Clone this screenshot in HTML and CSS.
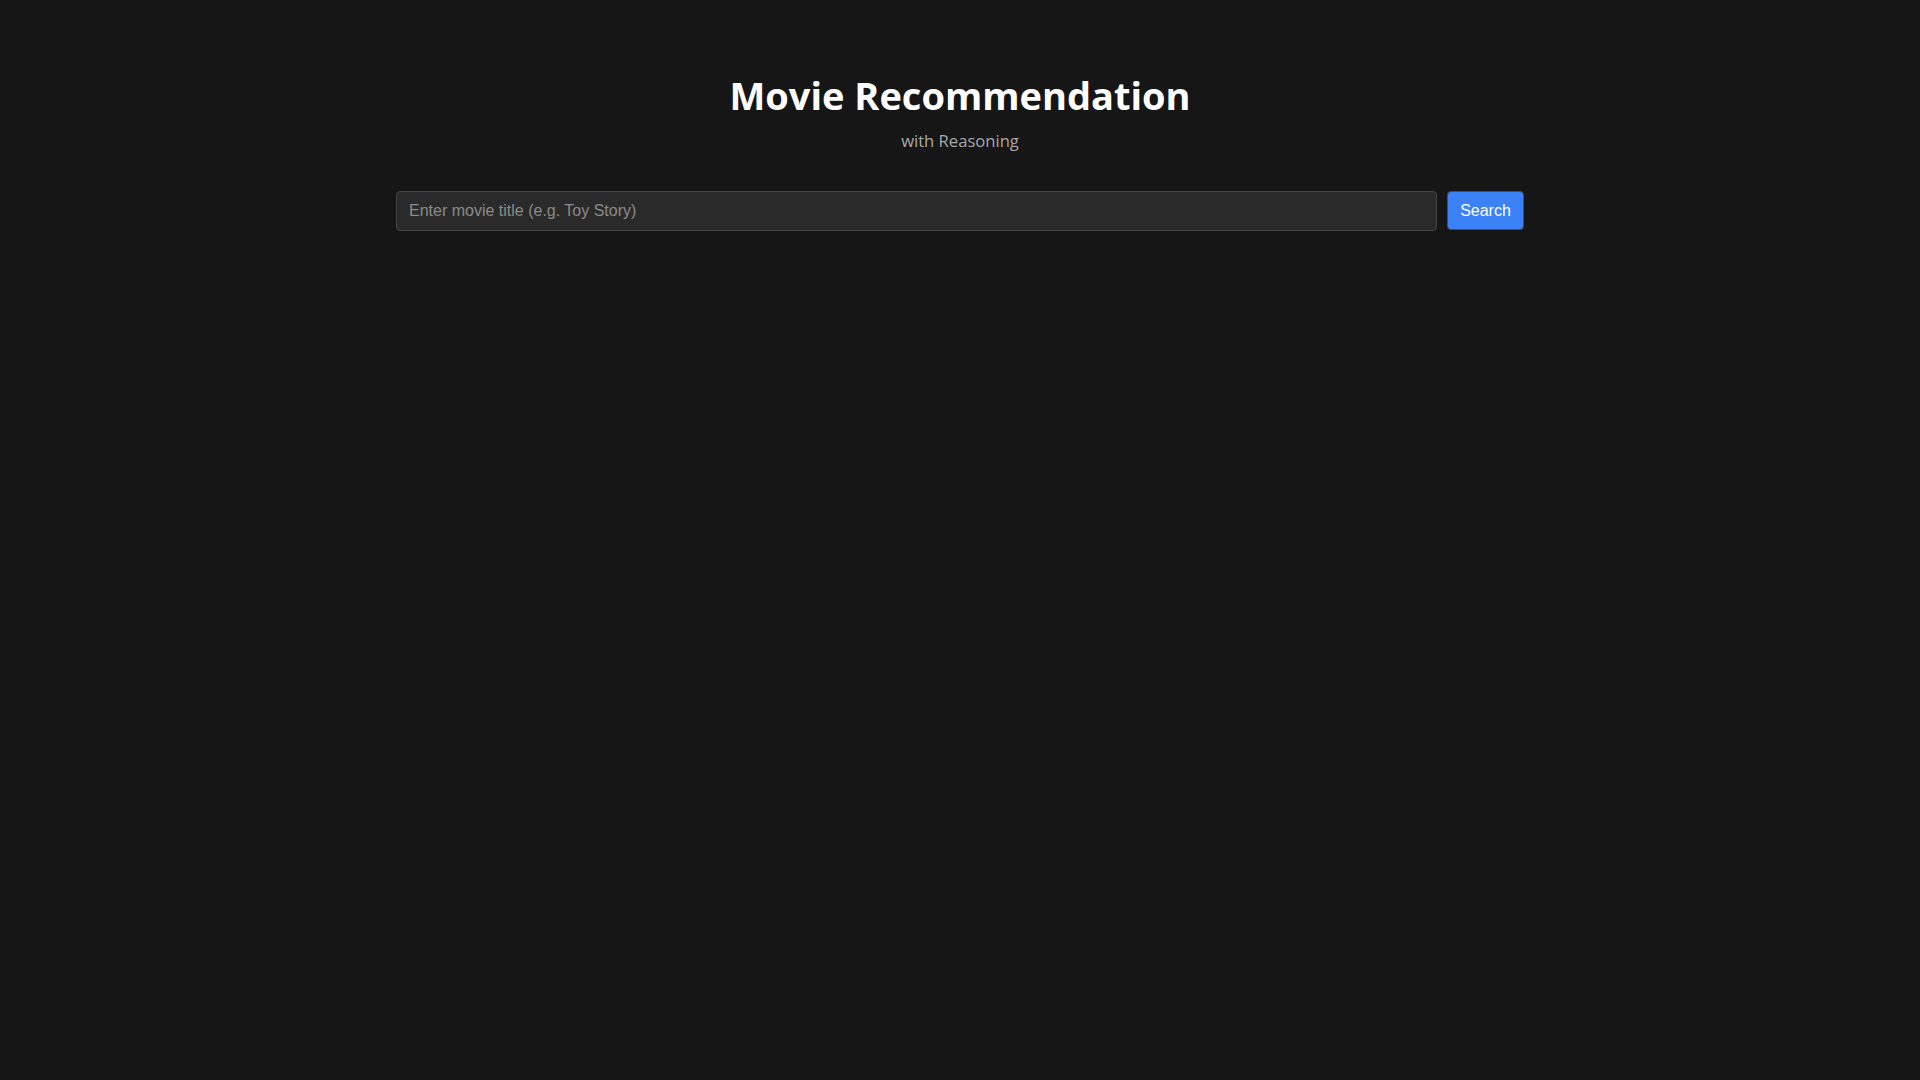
FILE: index.html
```html
<!DOCTYPE html>
<html lang="en">
<head>
<meta charset="utf-8">
<title>Movie Recommendation</title>
<link rel="stylesheet" href="styles.css">
</head>
<body>
<main class="container">
  <header class="header">
    <h1 class="title">Movie Recommendation</h1>
    <p class="subtitle">with Reasoning</p>
  </header>
  <form class="search" onsubmit="return false;">
    <input class="search-input" type="text" placeholder="Enter movie title (e.g. Toy Story)">
    <button class="search-button" type="submit">Search</button>
  </form>
</main>
</body>
</html>
```

FILE: styles.css
```css
html, body {
  margin: 0;
  padding: 0;
  background: #161616;
  height: 100%;
}
body {
  font-family: "Open Sans", "Noto Sans", sans-serif;
  color: #ffffff;
}
.container {
  width: 1128px;
  margin: 0 auto;
  padding-top: 68px;
}
.header {
  text-align: center;
}
.title {
  margin: 0;
  font-size: 38px;
  font-weight: 700;
  line-height: 54px;
  color: #ffffff;
}
.subtitle {
  margin: 7px 0 0;
  font-size: 16.6px;
  line-height: 24px;
  color: #a8a8a8;
}
.search {
  display: flex;
  gap: 10px;
  margin-top: 38px;
}
.search-input {
  flex: 1;
  height: 40px;
  box-sizing: border-box;
  padding: 0 12px;
  background: #2a2a2a;
  border: 1px solid #454545;
  border-radius: 4px;
  color: #dddddd;
  font-family: "Liberation Sans", Arial, sans-serif;
  font-size: 16px;
  outline: none;
}
.search-input::placeholder {
  color: #8a8a8a;
}
.search-button {
  height: 39px;
  width: 77px;
  box-sizing: border-box;
  padding: 0;
  background: #3b82f6;
  border: 1px solid #4a4a4a;
  border-radius: 4px;
  color: #ffffff;
  font-family: "Liberation Sans", Arial, sans-serif;
  font-size: 16px;
  cursor: pointer;
}
```
